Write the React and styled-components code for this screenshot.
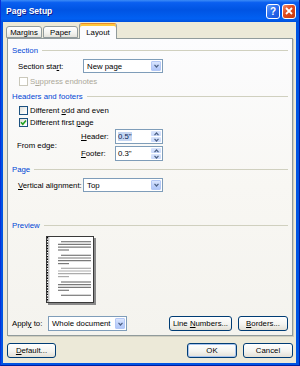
import styled, { createGlobalStyle } from 'styled-components';

const GlobalStyle = createGlobalStyle`
  html, body {
    margin: 0;
    padding: 0;
    background: #ece9d8;
  }
  body {
    font-family: "Liberation Sans", Arial, sans-serif;
    font-size: 7.8px;
    color: #000;
  }
  * {
    box-sizing: border-box;
  }
`;

const Window = styled.div`
  width: 300px;
  height: 366px;
  display: flex;
  flex-direction: column;
  background: #0054e3;
  border-left: 1px solid #0831d9;
  border-right: 1px solid #001ea0;
  border-bottom: 1px solid #001ea0;
`;

const TitleBar = styled.div`
  height: 22px;
  flex-shrink: 0;
  display: flex;
  align-items: center;
  padding: 0 3px 0 5px;
  background: linear-gradient(
    to bottom,
    #3c8cf7 0%,
    #0a5ff0 12%,
    #0054e3 45%,
    #0160f2 85%,
    #0050dc 100%
  );
  color: #fff;
  font-weight: bold;
  font-size: 8.5px;
  text-shadow: 1px 1px 0 #0f1b89;
`;

const Title = styled.span`
  flex: 1;
`;

const CaptionButton = styled.div`
  width: 14px;
  height: 15px;
  margin-left: 2px;
  border: 1px solid #fff;
  border-radius: 3px;
  display: flex;
  align-items: center;
  justify-content: center;
  color: #fff;
  font-size: 10px;
  font-weight: bold;
  text-shadow: none;
  background: ${(p) =>
    p.$close
      ? 'linear-gradient(135deg, #f08a6a 0%, #e0491c 45%, #c43a10 100%)'
      : 'linear-gradient(135deg, #6a9ff8 0%, #2a6ef0 45%, #1a52d8 100%)'};
`;

const Body = styled.div`
  flex: 1;
  display: flex;
  flex-direction: column;
  margin: 0 3px 2px 2px;
  padding: 1px 3px 5px 4px;
  background: #ece9d8;
`;

const TabStrip = styled.div`
  display: flex;
  align-items: flex-end;
  height: 15px;
  position: relative;
  z-index: 1;
`;

const Tab = styled.div`
  height: ${(p) => (p.$active ? '16px' : '12px')};
  width: ${(p) => p.$w}px;
  margin-left: ${(p) => (p.$first ? '-1px' : '1px')};
  margin-bottom: ${(p) => (p.$active ? '-1px' : '0')};
  display: flex;
  align-items: center;
  justify-content: center;
  border: 1px solid #919b9c;
  border-bottom: ${(p) => (p.$active ? 'none' : '1px solid #919b9c')};
  border-radius: 3px 3px 0 0;
  background: ${(p) =>
    p.$active ? '#fcfcfe' : 'linear-gradient(to bottom, #fff 0%, #f3f3ef 60%, #e4e3dc 100%)'};
  box-shadow: ${(p) => (p.$active ? 'inset 0 2px 0 #ffc83c' : 'none')};
  border-top-color: ${(p) => (p.$active ? '#e68b2c' : '#919b9c')};
  padding-top: ${(p) => (p.$active ? '1px' : '0')};
`;

const Panel = styled.div`
  flex: 1;
  display: flex;
  flex-direction: column;
  padding: 5px 4px 4px 4px;
  border: 1px solid #919b9c;
  background: linear-gradient(to bottom, #fcfcfe 0%, #f8f7f3 50%, #f4f3ee 100%);
  box-shadow: 1px 1px 0 #d0cebf;
`;

const GroupHeader = styled.div`
  display: flex;
  align-items: center;
  gap: 4px;
  height: 12px;
  margin-top: ${(p) => p.$top || 0}px;
  color: #0046d5;

  &::after {
    content: '';
    flex: 1;
    height: 1px;
    background: #d0d0bf;
  }
`;

const Row = styled.div`
  display: flex;
  align-items: center;
  margin-top: ${(p) => p.$top || 0}px;
  padding-left: ${(p) => (p.$indent ? 6 : 0)}px;
`;

const Label = styled.span`
  width: ${(p) => p.$w}px;
  flex-shrink: 0;
`;

const Key = styled.span`
  text-decoration: underline;
`;

const Combo = styled.div`
  width: ${(p) => p.$w}px;
  height: ${(p) => p.$h || 14}px;
  display: flex;
  align-items: center;
  border: 1px solid #7f9db9;
  background: #fff;
  padding: 1px;
`;

const ComboText = styled.span`
  flex: 1;
  padding-left: 2px;
`;

const DropButton = styled.div`
  width: 10px;
  height: 100%;
  display: flex;
  align-items: center;
  justify-content: center;
  border-radius: 1px;
  background: linear-gradient(to bottom, #dbe6fd 0%, #c1d3fb 50%, #b0c6f8 100%);
  border: 1px solid #b4c8f6;
`;

const CheckRow = styled.label`
  display: flex;
  align-items: center;
  gap: 2px;
  height: 12px;
  margin-top: ${(p) => p.$top || 0}px;
  padding-left: 7px;
  color: ${(p) => (p.$disabled ? '#aca899' : '#000')};
`;

const Box = styled.span`
  width: 9px;
  height: 9px;
  display: flex;
  align-items: center;
  justify-content: center;
  border: 1px solid ${(p) => (p.$disabled ? '#cac8bb' : '#1c5180')};
  background: ${(p) =>
    p.$disabled ? '#fff' : 'linear-gradient(135deg, #dcdcd7 0%, #f6f6f4 60%, #fff 100%)'};
`;

const EdgeGrid = styled.div`
  display: grid;
  grid-template-columns: 64px 34px 48px;
  grid-template-rows: 15px 15px;
  row-gap: 2px;
  align-items: center;
  margin-top: 1px;
  padding-left: 5px;
`;

const EdgeLabel = styled.span`
  grid-row: 1 / span 2;
`;

const Spin = styled.div`
  height: 15px;
  display: flex;
  align-items: center;
  border: 1px solid #7f9db9;
  background: #fff;
  padding: 1px;
`;

const SpinText = styled.span`
  flex: 1;
  padding-left: 1px;
`;

const Selected = styled.span`
  background: #c5d6f2;
  color: #0b1e55;
`;

const SpinButtons = styled.div`
  width: 10px;
  height: 100%;
  display: flex;
  flex-direction: column;
  gap: 1px;
`;

const SpinHalf = styled.div`
  flex: 1;
  display: flex;
  align-items: center;
  justify-content: center;
  background: linear-gradient(to bottom, #dbe6fd 0%, #c8d7fa 100%);
  border-radius: 1px;
`;

const PreviewBox = styled.div`
  margin: 5px 0 0 34px;
  line-height: 0;
`;

const Spacer = styled.div`
  flex: 1;
`;

const ButtonGroup = styled.div`
  display: flex;
  align-items: center;
  gap: 6px;
`;

const Button = styled.div`
  width: ${(p) => p.$w}px;
  height: 15px;
  display: flex;
  align-items: center;
  justify-content: center;
  border: 1px solid #003c74;
  border-radius: 3px;
  background: linear-gradient(to bottom, #fff 0%, #f4f4f0 55%, #e3e0d6 100%);
  box-shadow: ${(p) => (p.$default ? 'inset 0 0 0 1px #a8c4ee' : 'none')};
`;

const ButtonRow = styled.div`
  display: flex;
  align-items: center;
  margin-top: 7px;
`;

const Chevron = ({ up }) => (
  <svg width="5" height="4" viewBox="0 0 5 4">
    <polyline
      points={up ? '0.5,3.2 2.5,1 4.5,3.2' : '0.5,0.8 2.5,3 4.5,0.8'}
      fill="none"
      stroke="#4d6185"
      strokeWidth="1.2"
    />
  </svg>
);

const DropDown = ({ w, h, children }) => (
  <Combo $w={w} $h={h}>
    <ComboText>{children}</ComboText>
    <DropButton>
      <Chevron />
    </DropButton>
  </Combo>
);

const SpinBox = ({ children }) => (
  <Spin>
    <SpinText>{children}</SpinText>
    <SpinButtons>
      <SpinHalf>
        <Chevron up />
      </SpinHalf>
      <SpinHalf>
        <Chevron />
      </SpinHalf>
    </SpinButtons>
  </Spin>
);

const Check = ({ checked, disabled, top, children }) => (
  <CheckRow $top={top} $disabled={disabled}>
    <Box $disabled={disabled}>
      {checked && (
        <svg width="7" height="7" viewBox="0 0 7 7">
          <polyline points="1,3.2 2.8,5.2 6,1.4" fill="none" stroke="#21a121" strokeWidth="1.6" />
        </svg>
      )}
    </Box>
    <span>{children}</span>
  </CheckRow>
);

// page thumbnail: paragraphs of grey lines, first line indented
const paragraphs = [
  { y: 5.7, n: 4, c: '#7a7a7a' },
  { y: 19.3, n: 4, c: '#7a7a7a' },
  { y: 32.3, n: 4, c: '#acacac' },
  { y: 46, n: 4, c: '#7a7a7a' },
  { y: 59.3, n: 1, c: '#7a7a7a' },
];

const PagePreview = () => (
  <svg width="51" height="70" viewBox="0 0 51 70">
    <rect x="2" y="2" width="48" height="67" fill="#8a8a8a" />
    <rect x="0.5" y="0.5" width="47" height="66" fill="#fff" stroke="#3a3a3a" />
    <line x1="1.5" y1="1" x2="1.5" y2="66" stroke="#000" strokeWidth="1.2" strokeDasharray="1.4 1.3" />
    <line x1="2.8" y1="1" x2="2.8" y2="66" stroke="#9a9a9a" strokeWidth="0.8" />
    {paragraphs.map((p, i) =>
      [0, 2.7, 5.4, 8.3].slice(0, p.n).map((dy, j) => (
        <line
          key={`${i}-${j}`}
          x1={j === 0 ? 15 : 12}
          x2={j === 3 ? 23 : 45}
          y1={p.y + dy}
          y2={p.y + dy}
          stroke={p.c}
          strokeWidth="1.2"
        />
      ))
    )}
  </svg>
);

const App = () => (
  <>
    <GlobalStyle />
    <Window>
      <TitleBar>
        <Title>Page Setup</Title>
        <CaptionButton>?</CaptionButton>
        <CaptionButton $close>
          <svg width="8" height="8" viewBox="0 0 8 8">
            <path d="M1 1 L7 7 M7 1 L1 7" stroke="#fff" strokeWidth="1.8" />
          </svg>
        </CaptionButton>
      </TitleBar>
      <Body>
        <TabStrip>
          <Tab $first $w={36}>Margins</Tab>
          <Tab $w={35}>Paper</Tab>
          <Tab $active $w={38}>Layout</Tab>
        </TabStrip>
        <Panel>
          <GroupHeader>Section</GroupHeader>
          <Row $indent $top={3}>
            <Label $w={65}>
              Section sta<Key>r</Key>t:
            </Label>
            <DropDown w={80}>New page</DropDown>
          </Row>
          <Check disabled top={2}>
            S<Key>u</Key>ppress endnotes
          </Check>

          <GroupHeader $top={3}>Headers and footers</GroupHeader>
          <Check top={2}>
            Different <Key>o</Key>dd and even
          </Check>
          <Check checked>
            Different first <Key>p</Key>age
          </Check>
          <EdgeGrid>
            <EdgeLabel>From edge:</EdgeLabel>
            <span>
              <Key>H</Key>eader:
            </span>
            <SpinBox>
              <Selected>0.5"</Selected>
            </SpinBox>
            <span>
              <Key>F</Key>ooter:
            </span>
            <SpinBox>0.3"</SpinBox>
          </EdgeGrid>

          <GroupHeader $top={2}>Page</GroupHeader>
          <Row $indent $top={3}>
            <Label $w={65}>
              <Key>V</Key>ertical alignment:
            </Label>
            <DropDown w={80}>Top</DropDown>
          </Row>

          <GroupHeader $top={27}>Preview</GroupHeader>
          <PreviewBox>
            <PagePreview />
          </PreviewBox>

          <Spacer />
          <Row>
            <Label $w={36}>
              Appl<Key>y</Key> to:
            </Label>
            <DropDown w={79} h={15}>
              Whole document
            </DropDown>
            <Spacer />
            <ButtonGroup>
              <Button $w={63}>
                Line&nbsp;<Key>N</Key>umbers...
              </Button>
              <Button $w={50}>
                <Key>B</Key>orders...
              </Button>
            </ButtonGroup>
          </Row>
        </Panel>
        <ButtonRow>
          <Button $w={49}>
            <Key>D</Key>efault...
          </Button>
          <Spacer />
          <ButtonGroup>
            <Button $w={50} $default>
              OK
            </Button>
            <Button $w={50}>Cancel</Button>
          </ButtonGroup>
        </ButtonRow>
      </Body>
    </Window>
  </>
);

export default App;
